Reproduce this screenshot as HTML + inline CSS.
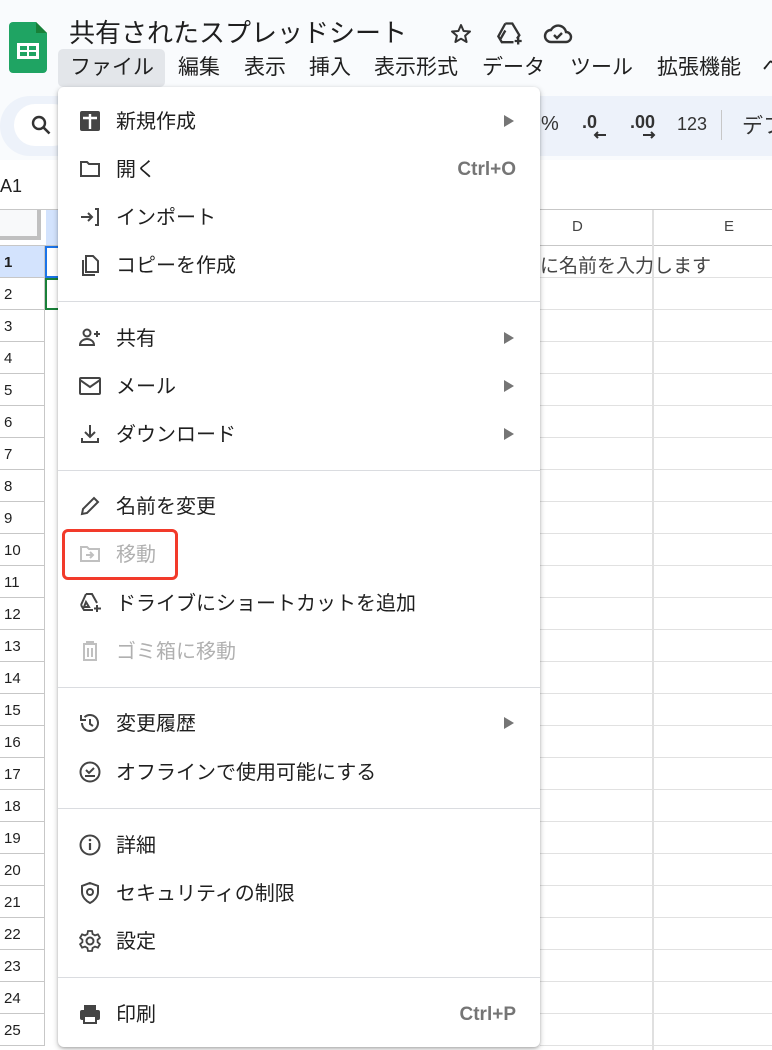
<!DOCTYPE html>
<html><head><meta charset="utf-8"><style>
*{margin:0;padding:0;box-sizing:border-box}
body{width:772px;height:1050px;overflow:hidden;background:#f9fbfd;font-family:"Liberation Sans","Noto Sans CJK JP",sans-serif;position:relative;color:#1f1f1f}
.abs{position:absolute}
.title{left:69px;top:13px;font-size:26px;white-space:nowrap}
.mb{top:51px;font-size:21px;white-space:nowrap;color:#1f1f1f}
.tb{left:0;top:96px;width:772px;height:60px;background:#edf2fa;border-radius:30px 0 0 30px}
.grid{left:0;top:160px;width:772px;height:890px;background:#fff}
.rh{left:0;width:45px;height:32px;border-bottom:1px solid #c7c7c7;border-right:1px solid #c7c7c7;font-size:15px;color:#1f1f1f;padding:8px 0 0 4px;background:#fff}
.hl{left:540px;width:232px;height:1px;background:#e1e1e1}
.menu{left:58px;top:87px;width:482px;height:960px;background:#fff;border-radius:6px;box-shadow:0 2px 6px rgba(0,0,0,.25),0 1px 2px rgba(0,0,0,.15)}
.it{position:absolute;left:0;width:482px;height:40px;font-size:20px;line-height:40px}
.it .t{position:absolute;left:58px;top:2px;white-space:nowrap}
.it svg{position:absolute;left:20px;top:9px}
.it .ar{position:absolute;left:446px;top:15px;width:0;height:0;border-left:10px solid #757575;border-top:6px solid transparent;border-bottom:6px solid transparent}
.it .sc{position:absolute;right:24px;top:2px;color:#757575;font-size:19px;font-weight:bold}
.dis{color:#b0b0b0}
.dv{position:absolute;left:0;width:482px;height:1px;background:#dadce0}
</style></head><body>
<svg class="abs" style="left:9px;top:22px" width="38" height="51" viewBox="0 0 38 51"><path d="M4 0H27L38 11V47a4 4 0 0 1-4 4H4a4 4 0 0 1-4-4V4a4 4 0 0 1 4-4z" fill="#1fa463"/><path d="M27 0V11H38z" fill="#188038"/><rect x="8" y="21" width="22" height="16" fill="#fff"/><rect x="11" y="24" width="7" height="4" fill="#1fa463"/><rect x="20" y="24" width="7" height="4" fill="#1fa463"/><rect x="11" y="30" width="7" height="4" fill="#1fa463"/><rect x="20" y="30" width="7" height="4" fill="#1fa463"/></svg>
<div class="abs title">共有されたスプレッドシート</div>
<svg class="abs" style="left:449px;top:22px" width="24" height="24" viewBox="0 0 24 24"><path d="M12 3l2.6 6 6.4.5-4.9 4.2 1.5 6.3L12 16.7 6.4 20l1.5-6.3L3 9.5l6.4-.5z" fill="none" stroke="#333" stroke-width="2" stroke-linejoin="round"/></svg>
<svg class="abs" style="left:496px;top:20px" width="28" height="28" viewBox="0 0 24 24"><path d="M8 3h6l6 10-2 3M4 16l4-7 M8 3L2 14l3 5h10" fill="none" stroke="#333" stroke-width="2"/><path d="M19 15v6M16 18h6" stroke="#333" stroke-width="2"/></svg>
<svg class="abs" style="left:543px;top:20px" width="30" height="28" viewBox="0 0 30 28"><path d="M8 22h15a5 5 0 0 0 0-10 8 8 0 0 0-15-2 6 6 0 0 0 0 12z" fill="none" stroke="#333" stroke-width="2.4"/><path d="M11 15l3 3 5-5" fill="none" stroke="#333" stroke-width="2.4"/></svg>
<div class="abs" style="left:58px;top:49px;width:107px;height:38px;background:#e3e6ea;border-radius:5px"></div>
<div class="abs mb" style="left:70px">ファイル</div>
<div class="abs mb" style="left:178px">編集</div>
<div class="abs mb" style="left:244px">表示</div>
<div class="abs mb" style="left:309px">挿入</div>
<div class="abs mb" style="left:374px">表示形式</div>
<div class="abs mb" style="left:482px">データ</div>
<div class="abs mb" style="left:570px">ツール</div>
<div class="abs mb" style="left:657px">拡張機能</div>
<div class="abs mb" style="left:762px">ヘ</div>
<div class="abs tb"></div>
<div class="abs" style="left:14px;top:104px;width:60px;height:42px;background:#fff;border-radius:21px"></div>
<svg class="abs" style="left:30px;top:114px" width="24" height="24" viewBox="0 0 24 24"><circle cx="9" cy="9" r="6" fill="none" stroke="#333" stroke-width="2.4"/><path d="M13.5 13.5l6 6" stroke="#333" stroke-width="2.6"/></svg>
<div class="abs" style="left:541px;top:113px;font-size:20px;color:#333">%</div>
<div class="abs" style="left:582px;top:112px;font-size:18px;color:#333;font-weight:bold">.0</div>
<svg class="abs" style="left:593px;top:130px" width="14" height="10" viewBox="0 0 14 10"><path d="M13 5H2M5 2L2 5l3 3" fill="none" stroke="#333" stroke-width="2"/></svg>
<div class="abs" style="left:630px;top:112px;font-size:18px;color:#333;font-weight:bold">.00</div>
<svg class="abs" style="left:642px;top:130px" width="14" height="10" viewBox="0 0 14 10"><path d="M1 5h11M9 2l3 3-3 3" fill="none" stroke="#333" stroke-width="2"/></svg>
<div class="abs" style="left:677px;top:114px;font-size:18px;color:#333">123</div>
<div class="abs" style="left:721px;top:110px;width:1px;height:30px;background:#c7c7c7"></div>
<div class="abs" style="left:742px;top:110px;font-size:21px;color:#333;white-space:nowrap">デフ</div>
<div class="abs grid"></div>
<div class="abs" style="left:0;top:176px;font-size:18px">A1</div>
<div class="abs" style="left:0;top:209px;width:772px;height:1px;background:#c7c7c7"></div>
<div class="abs" style="left:0;top:210px;width:41px;height:30px;background:#f8f9fa;border-right:4px solid #c0c0c0;border-bottom:4px solid #c0c0c0"></div>
<div class="abs" style="left:46px;top:210px;width:150px;height:35px;background:#d3e3fd"></div>
<div class="abs" style="left:0;top:245px;width:772px;height:1px;background:#c7c7c7"></div>
<div class="abs" style="left:652px;top:210px;width:2px;height:840px;background:#e0e0e0"></div>
<div class="abs" style="left:572px;top:218px;font-size:15px;color:#444">D</div>
<div class="abs" style="left:724px;top:218px;font-size:15px;color:#444">E</div>
<div class="abs" style="left:540px;top:251px;font-size:19px;color:#444;white-space:nowrap">に名前を入力します</div>
<div class="abs" style="left:45px;top:246px;width:15px;height:32px;border:2px solid #1a73e8;border-right:none"></div>
<div class="abs" style="left:45px;top:278px;width:15px;height:32px;border:2px solid #188038;border-right:none"></div>
<div class="abs rh" style="top:246px;background:#d3e3fd;font-weight:bold">1</div>
<div class="abs rh" style="top:278px">2</div><div class="abs rh" style="top:310px">3</div><div class="abs rh" style="top:342px">4</div><div class="abs rh" style="top:374px">5</div><div class="abs rh" style="top:406px">6</div><div class="abs rh" style="top:438px">7</div><div class="abs rh" style="top:470px">8</div><div class="abs rh" style="top:502px">9</div><div class="abs rh" style="top:534px">10</div><div class="abs rh" style="top:566px">11</div><div class="abs rh" style="top:598px">12</div><div class="abs rh" style="top:630px">13</div><div class="abs rh" style="top:662px">14</div><div class="abs rh" style="top:694px">15</div><div class="abs rh" style="top:726px">16</div><div class="abs rh" style="top:758px">17</div><div class="abs rh" style="top:790px">18</div><div class="abs rh" style="top:822px">19</div><div class="abs rh" style="top:854px">20</div><div class="abs rh" style="top:886px">21</div><div class="abs rh" style="top:918px">22</div><div class="abs rh" style="top:950px">23</div><div class="abs rh" style="top:982px">24</div><div class="abs rh" style="top:1014px">25</div>
<div class="abs hl" style="top:277px"></div><div class="abs hl" style="top:309px"></div><div class="abs hl" style="top:341px"></div><div class="abs hl" style="top:373px"></div><div class="abs hl" style="top:405px"></div><div class="abs hl" style="top:437px"></div><div class="abs hl" style="top:469px"></div><div class="abs hl" style="top:501px"></div><div class="abs hl" style="top:533px"></div><div class="abs hl" style="top:565px"></div><div class="abs hl" style="top:597px"></div><div class="abs hl" style="top:629px"></div><div class="abs hl" style="top:661px"></div><div class="abs hl" style="top:693px"></div><div class="abs hl" style="top:725px"></div><div class="abs hl" style="top:757px"></div><div class="abs hl" style="top:789px"></div><div class="abs hl" style="top:821px"></div><div class="abs hl" style="top:853px"></div><div class="abs hl" style="top:885px"></div><div class="abs hl" style="top:917px"></div><div class="abs hl" style="top:949px"></div><div class="abs hl" style="top:981px"></div><div class="abs hl" style="top:1013px"></div><div class="abs hl" style="top:1045px"></div>

<div class="abs menu">
<div class="it" style="top:13px"><svg width="24" height="24" viewBox="0 0 24 24"><rect x="2" y="2" width="20" height="20" rx="2" fill="#444"/><path d="M12 5v15M5 9h14" stroke="#fff" stroke-width="2.4"/></svg><span class="t">新規作成</span><i class="ar"></i></div>
<div class="it" style="top:61px"><svg width="24" height="24" viewBox="0 0 24 24"><path d="M3 5h6l2 2h10v12H3z" fill="none" stroke="#444" stroke-width="2"/></svg><span class="t">開く</span><span class="sc">Ctrl+O</span></div>
<div class="it" style="top:109px"><svg width="24" height="24" viewBox="0 0 24 24"><path d="M3 12h11M10 8l4 4-4 4M17 4h3v16h-3" fill="none" stroke="#444" stroke-width="2"/></svg><span class="t">インポート</span></div>
<div class="it" style="top:157px"><svg width="24" height="24" viewBox="0 0 24 24"><path d="M8 3h7l5 5v11H8zM5 7v15h12" fill="none" stroke="#444" stroke-width="2"/></svg><span class="t">コピーを作成</span></div>
<div class="dv" style="top:214px"></div>
<div class="it" style="top:230px"><svg width="24" height="24" viewBox="0 0 24 24"><circle cx="9" cy="7" r="3.5" fill="none" stroke="#444" stroke-width="2"/><path d="M2 19c0-4 4-6 7-6s7 2 7 6z" fill="none" stroke="#444" stroke-width="2"/><path d="M19 5v6M16 8h6" stroke="#444" stroke-width="2"/></svg><span class="t">共有</span><i class="ar"></i></div>
<div class="it" style="top:278px"><svg width="24" height="24" viewBox="0 0 24 24"><rect x="2" y="4" width="20" height="16" rx="1" fill="none" stroke="#444" stroke-width="2"/><path d="M2 6l10 7 10-7" fill="none" stroke="#444" stroke-width="2"/></svg><span class="t">メール</span><i class="ar"></i></div>
<div class="it" style="top:326px"><svg width="24" height="24" viewBox="0 0 24 24"><path d="M12 3v12M7 10l5 5 5-5M4 16v4h16v-4" fill="none" stroke="#444" stroke-width="2"/></svg><span class="t">ダウンロード</span><i class="ar"></i></div>
<div class="dv" style="top:383px"></div>
<div class="it" style="top:398px"><svg width="24" height="24" viewBox="0 0 24 24"><path d="M4 20l1-5L16 4l4 4L9 19z" fill="none" stroke="#444" stroke-width="2"/></svg><span class="t">名前を変更</span></div>
<div class="it dis" style="top:446px"><svg width="24" height="24" viewBox="0 0 24 24"><path d="M3 5h6l2 2h10v12H3z" fill="none" stroke="#c0c0c0" stroke-width="2"/><path d="M8 13h7M12 10l3 3-3 3" fill="none" stroke="#c0c0c0" stroke-width="2"/></svg><span class="t">移動</span></div>
<div class="it" style="top:495px"><svg width="24" height="24" viewBox="0 0 24 24"><path d="M8 3h6l5 9M3 14l5-11M3 14l3 5h9M8 11l3 5H6z" fill="none" stroke="#444" stroke-width="2"/><path d="M19 14v7M16 17.5h7" stroke="#444" stroke-width="2"/></svg><span class="t">ドライブにショートカットを追加</span></div>
<div class="it dis" style="top:543px"><svg width="24" height="24" viewBox="0 0 24 24"><path d="M5 5h14M9 5V3h6v2M6 6v15h12V6M10 9v9M14 9v9" fill="none" stroke="#c0c0c0" stroke-width="2"/></svg><span class="t">ゴミ箱に移動</span></div>
<div class="dv" style="top:600px"></div>
<div class="it" style="top:615px"><svg width="24" height="24" viewBox="0 0 24 24"><path d="M4 12a8 8 0 1 0 2.5-5.8M3 4v5h5M12 8v5l3 2" fill="none" stroke="#444" stroke-width="2"/></svg><span class="t">変更履歴</span><i class="ar"></i></div>
<div class="it" style="top:664px"><svg width="24" height="24" viewBox="0 0 24 24"><circle cx="12" cy="12" r="9.5" fill="none" stroke="#444" stroke-width="2"/><path d="M8 10l3 3 5-5M7 16h10" fill="none" stroke="#444" stroke-width="2"/></svg><span class="t">オフラインで使用可能にする</span></div>
<div class="dv" style="top:721px"></div>
<div class="it" style="top:737px"><svg width="24" height="24" viewBox="0 0 24 24"><circle cx="12" cy="12" r="9.5" fill="none" stroke="#444" stroke-width="2"/><path d="M12 10v7" stroke="#444" stroke-width="2.2"/><circle cx="12" cy="7" r="1.3" fill="#444"/></svg><span class="t">詳細</span></div>
<div class="it" style="top:785px"><svg width="24" height="24" viewBox="0 0 24 24"><path d="M12 2l8 3v6c0 5-4 9-8 11-4-2-8-6-8-11V5z" fill="none" stroke="#444" stroke-width="2"/><circle cx="12" cy="11" r="3" fill="none" stroke="#444" stroke-width="2"/></svg><span class="t">セキュリティの制限</span></div>
<div class="it" style="top:833px"><svg width="24" height="24" viewBox="0 0 24 24"><circle cx="12" cy="12" r="3.5" fill="none" stroke="#444" stroke-width="2"/><path d="M10 2h4l.6 3 2.4 1.4 2.9-1 2 3.4-2.3 2v2.4l2.3 2-2 3.4-2.9-1L14.6 19 14 22h-4l-.6-3L7 17.6l-2.9 1-2-3.4 2.3-2v-2.4l-2.3-2 2-3.4 2.9 1L9.4 5z" fill="none" stroke="#444" stroke-width="1.8"/></svg><span class="t">設定</span></div>
<div class="dv" style="top:890px"></div>
<div class="it" style="top:906px"><svg width="24" height="24" viewBox="0 0 24 24"><path d="M6 3h12v5H6z" fill="#444"/><rect x="2" y="8" width="20" height="10" rx="2" fill="#444"/><rect x="6" y="14" width="12" height="7" fill="#fff" stroke="#444" stroke-width="2"/></svg><span class="t">印刷</span><span class="sc">Ctrl+P</span></div>
</div>
<div class="abs" style="left:62px;top:529px;width:116px;height:51px;border:3px solid #f23a2a;border-radius:6px"></div>
</body></html>
